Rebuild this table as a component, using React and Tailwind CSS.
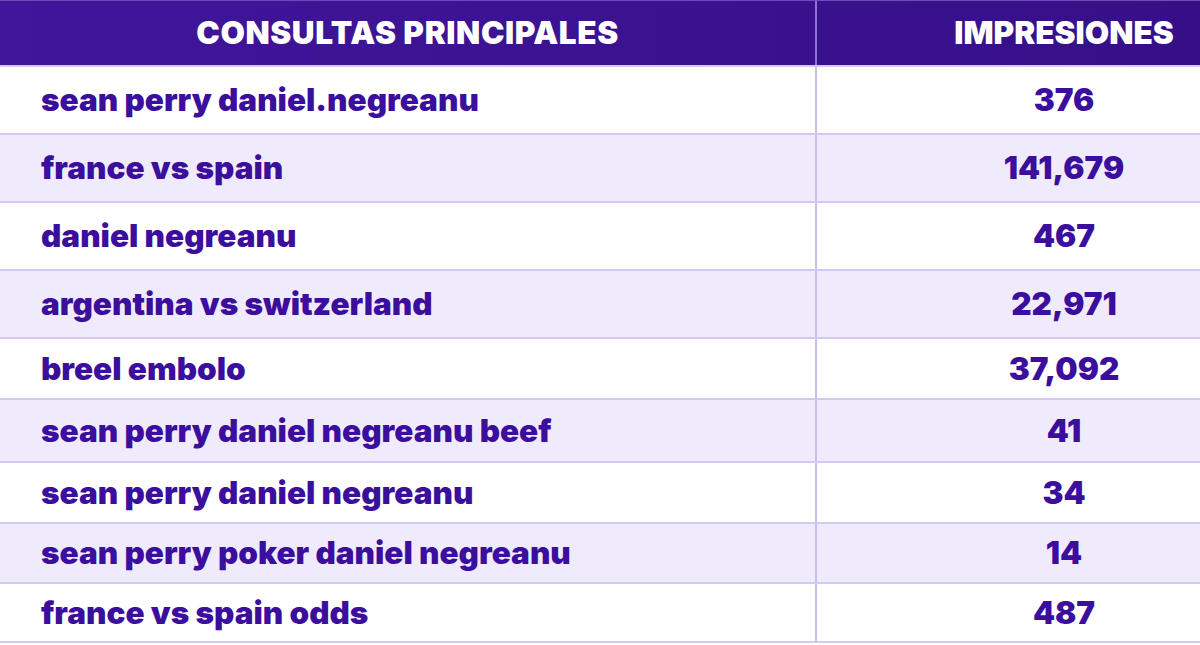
import React from "react";

const rows = [
  ["sean perry daniel.negreanu", "376", "h-[68px]"],
  ["france vs spain", "141,679", "h-[68px]"],
  ["daniel negreanu", "467", "h-[68px]"],
  ["argentina vs switzerland", "22,971", "h-[68px]"],
  ["breel embolo", "37,092", "h-[61px]"],
  ["sean perry daniel negreanu beef", "41", "h-[63px]"],
  ["sean perry daniel negreanu", "34", "h-[61px]"],
  ["sean perry poker daniel negreanu", "14", "h-[60px]"],
  ["france vs spain odds", "487", "h-[61px]"],
];

export default function App() {
  return (
    <div
      className="w-[1200px] h-[645px] bg-white overflow-hidden"
      style={{ fontFamily: "Inter, Lato, sans-serif" }}
    >
      <div className="grid grid-cols-[817px_1fr] h-[65px] bg-gradient-to-r from-[#40169a] to-[#360f88] border-t border-[#6a4bb8]">
        <div className="flex items-center justify-center border-r-2 border-[#8a74cc] text-white font-black text-[31.5px] tracking-[0.6px]">
          CONSULTAS PRINCIPALES
        </div>
        <div className="flex items-center justify-center pl-[111px] text-white font-black text-[31.5px]">
          IMPRESIONES
        </div>
      </div>
      {rows.map(([query, value, h], i) => (
        <div
          key={i}
          className={`grid grid-cols-[817px_1fr] ${h} border-t-2 border-[#d4c9f4] ${
            i % 2 === 1 ? "bg-[#f0ebfc]" : "bg-white"
          } ${i === rows.length - 1 ? "border-b-2" : ""}`}
        >
          <div className="flex items-center pl-[41px] border-r-2 border-[#cbbdf2] text-[#3b0e9d] font-black text-[31.5px]">
            {query}
          </div>
          <div className="flex items-center justify-center pl-[111px] text-[#3b0e9d] font-black text-[31.5px]">
            {value}
          </div>
        </div>
      ))}
    </div>
  );
}
